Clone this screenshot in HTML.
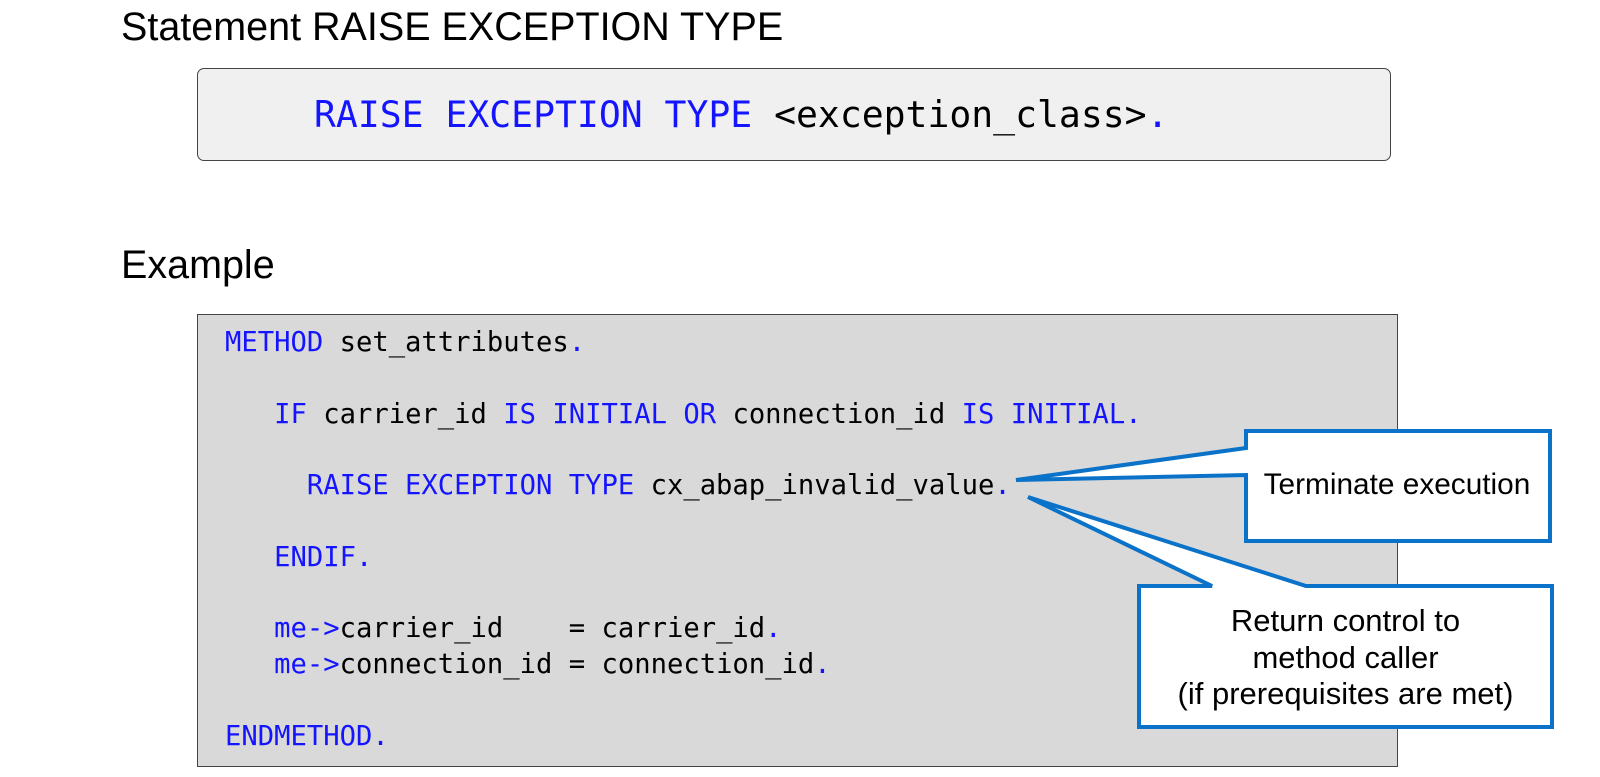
<!DOCTYPE html>
<html><head><meta charset="utf-8"><style>
body{margin:0;width:1600px;height:777px;background:#fff;position:relative;overflow:hidden;font-family:"Liberation Sans",Arial,sans-serif}
.h{position:absolute;left:121px;font-size:39.5px;color:#000;line-height:1}
.b1{position:absolute;left:197px;top:68px;width:1192px;height:91px;background:#f0f0f0;border:1px solid #444;border-radius:7px}
.c1{position:absolute;left:314px;top:93px;font-family:"DejaVu Sans Mono","Liberation Mono",monospace;font-size:36.4px;line-height:44px;white-space:pre;color:#000}
.b2{position:absolute;left:197px;top:314px;width:1199px;height:451px;background:#d9d9d9;border:1px solid #444}
.c2{position:absolute;left:225px;top:325px;font-family:"DejaVu Sans Mono","Liberation Mono",monospace;font-size:27.2px;line-height:35.8px;white-space:pre;color:#000}
.k{color:#1414ff}
.t{position:absolute;font-size:29.8px;color:#000;text-align:center;line-height:36.5px}
</style></head><body>
<div class="h" style="top:8px">Statement RAISE EXCEPTION TYPE</div>
<div class="b1"></div>
<div class="c1"><span class="k">RAISE EXCEPTION TYPE</span> &lt;exception_class&gt;<span class="k">.</span></div>
<div class="h" style="top:246px">Example</div>
<div class="b2"></div>
<div class="c2"><span class="k">METHOD</span> set_attributes<span class="k">.</span>

   <span class="k">IF</span> carrier_id <span class="k">IS INITIAL OR</span> connection_id <span class="k">IS INITIAL.</span>

     <span class="k">RAISE EXCEPTION TYPE</span> cx_abap_invalid_value<span class="k">.</span>

   <span class="k">ENDIF.</span>

   <span class="k">me-&gt;</span>carrier_id    = carrier_id<span class="k">.</span>
   <span class="k">me-&gt;</span>connection_id = connection_id<span class="k">.</span>

<span class="k">ENDMETHOD.</span></div>
<svg style="position:absolute;left:0;top:0" width="1600" height="777">
<path d="M1246,431 L1550,431 L1550,541 L1246,541 L1246,475 L1016,480 L1246,448 Z" fill="#fff" stroke="#0a72c8" stroke-width="4"/>
<path d="M1139,586 L1212,586 L1028,497 L1306,586 L1552,586 L1552,727 L1139,727 Z" fill="#fff" stroke="#0a72c8" stroke-width="4"/>
</svg>
<div class="t" style="left:1246px;top:467px;width:302px">Terminate execution</div>
<div class="t" style="left:1141px;top:603px;width:409px;font-size:31px">Return control to<br>method caller<br>(if prerequisites are met)</div>
</body></html>
